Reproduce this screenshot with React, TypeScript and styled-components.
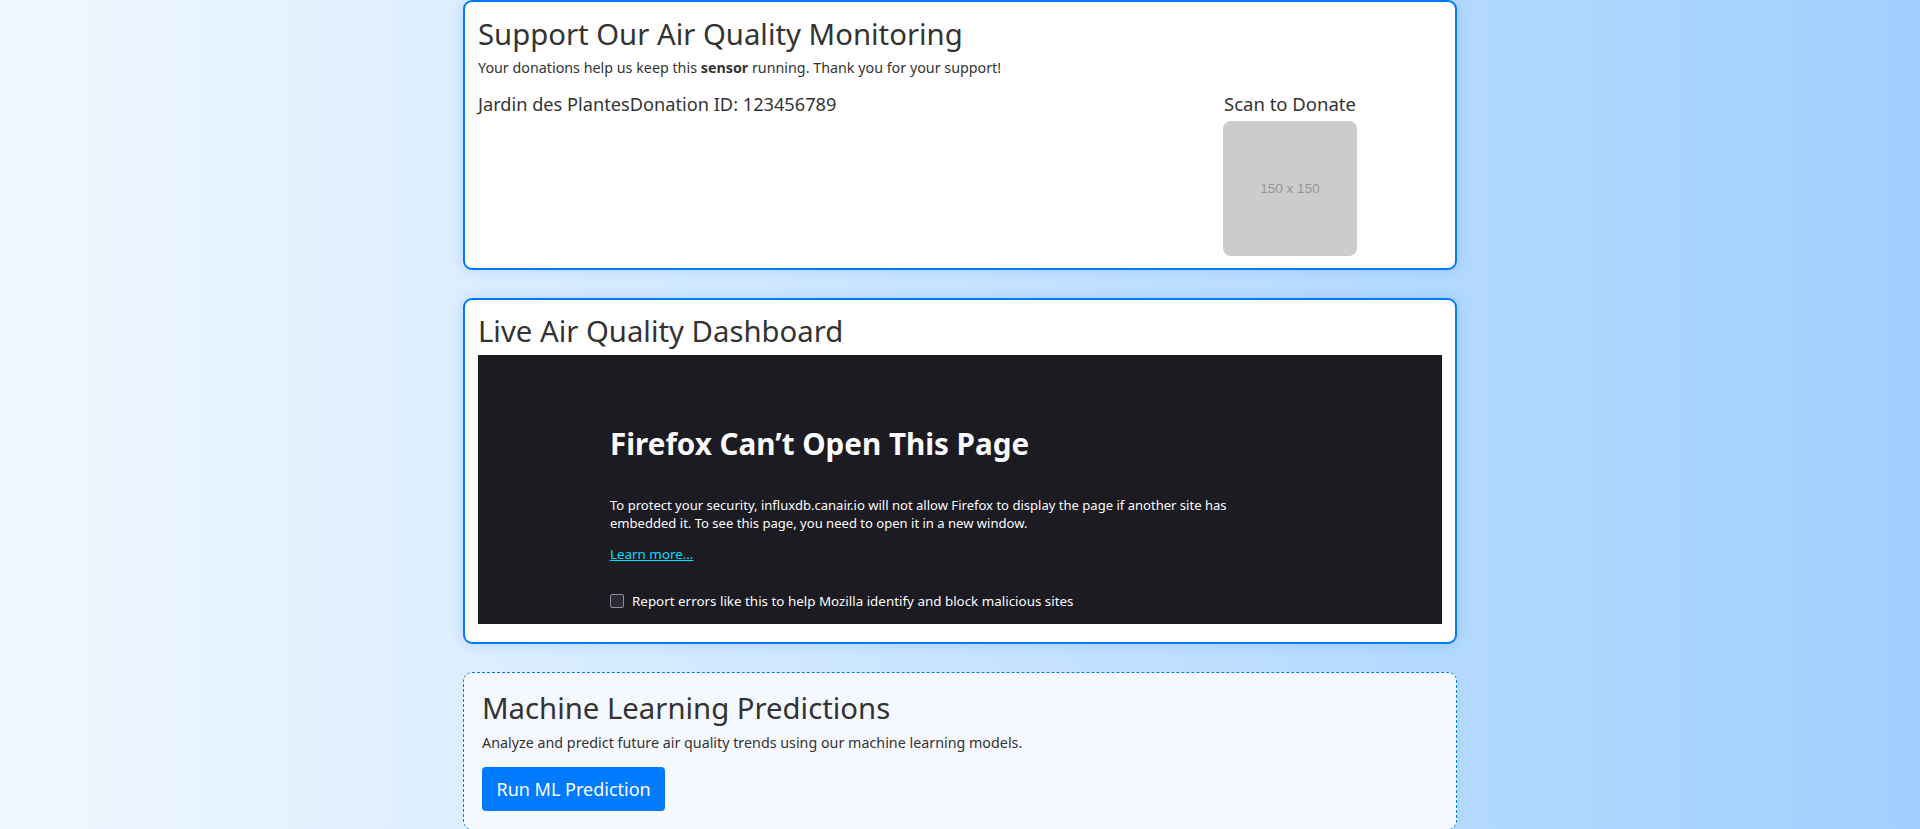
import React from "react";
import styled, { createGlobalStyle } from "styled-components";

const GlobalStyle = createGlobalStyle`
  html, body {
    margin: 0;
    padding: 0;
  }
  body {
    font-family: "Noto Sans", "Open Sans", sans-serif;
    color: #333;
    background: linear-gradient(to right, #f0f8ff 0%, #a0cfff 100%);
    min-height: 100vh;
  }
`;

const Page = styled.main`
  display: flex;
  flex-direction: column;
  align-items: center;
  gap: 28px;
  padding-bottom: 40px;
`;

const Card = styled.section<{ $variant?: "solid" | "dashed" }>`
  box-sizing: border-box;
  width: 994px;
  border-radius: 9px;
  ${(p) =>
    p.$variant === "dashed"
      ? `
    border: 1px dashed #007bff;
    background: #f5f9ff;
    padding: 17px 18px 18px;
  `
      : `
    border: 2px solid #007bff;
    background: #ffffff;
    padding: 12px 13px;
    box-shadow: 0 0 14px rgba(0, 123, 255, 0.18);
  `}
`;

const Title = styled.h2<{ $top?: number; $bottom?: number }>`
  margin: ${(p) => p.$top ?? 0}px 0 ${(p) => p.$bottom ?? 6}px;
  font-size: 29.3px;
  line-height: 36px;
  font-weight: 400;
  color: #333;
`;

const Lead = styled.p<{ $bottom?: number }>`
  margin: 0 0 ${(p) => p.$bottom ?? 14}px;
  font-size: 14.3px;
  line-height: 21px;
  color: #333;
`;

const DonateRow = styled.div`
  display: flex;
  align-items: flex-start;
`;

const DonateInfo = styled.div`
  flex: 1;
  font-size: 18.2px;
  line-height: 27px;
  color: #333;
`;

const QrColumn = styled.div`
  width: 304px;
  display: flex;
  flex-direction: column;
  align-items: center;
  gap: 3px;
`;

const QrLabel = styled.div`
  font-size: 18.5px;
  line-height: 26px;
  color: #333;
`;

const QrPlaceholder = styled.div`
  width: 134px;
  height: 135px;
  margin-top: 1px;
  border-radius: 8px;
  background: #cccccc;
  color: #969696;
  display: flex;
  align-items: center;
  justify-content: center;
  font-family: "Liberation Sans", Arial, sans-serif;
  font-size: 13.5px;
`;

const Frame = styled.div`
  height: 269px;
  margin: 0 0 6px;
  background: #1c1b22;
  color: #fbfbfe;
  box-sizing: border-box;
  padding: 72px 0 0 132px;
  display: flex;
  flex-direction: column;
  align-items: flex-start;
  overflow: hidden;
`;

const FrameTitle = styled.h1`
  margin: 0 0 35px;
  font-size: 29.6px;
  line-height: 33.6px;
  font-weight: 700;
  color: #fbfbfe;
`;

const FrameText = styled.p`
  margin: 0 0 13px;
  font-size: 13.05px;
  line-height: 18px;
  color: #fbfbfe;
`;

const FrameLink = styled.a`
  display: block;
  font-size: 13.4px;
  line-height: 18px;
  color: #00ddff;
  text-decoration: underline;
  margin-bottom: 29px;
`;

const CheckRow = styled.label`
  display: flex;
  align-items: center;
  gap: 8px;
  font-size: 13.4px;
  line-height: 18px;
  color: #fbfbfe;
`;

const CheckBox = styled.span`
  box-sizing: border-box;
  width: 14px;
  height: 14px;
  border: 1px solid #8f8f9d;
  border-radius: 2px;
  background: #2b2a33;
`;

const RunButton = styled.button`
  height: 44px;
  padding: 0 14.5px;
  border: none;
  border-radius: 4px;
  background: #007bff;
  color: #ffffff;
  font-family: "Noto Sans", "Open Sans", sans-serif;
  font-size: 18px;
  line-height: 44px;
  cursor: pointer;
`;

export default function App() {
  return (
    <>
      <GlobalStyle />
      <Page>
        <Card>
          <Title $top={2} $bottom={5}>
            Support Our Air Quality Monitoring
          </Title>
          <Lead $bottom={13}>
            Your donations help us keep this <strong>sensor</strong> running. Thank you for
            your support!
          </Lead>
          <DonateRow>
            <DonateInfo>
              Jardin des Plantes<span>Donation ID: 123456789</span>
            </DonateInfo>
            <QrColumn>
              <QrLabel>Scan to Donate</QrLabel>
              <QrPlaceholder>150 x 150</QrPlaceholder>
            </QrColumn>
          </DonateRow>
        </Card>

        <Card>
          <Title $top={1} $bottom={6}>
            Live Air Quality Dashboard
          </Title>
          <Frame>
            <FrameTitle>Firefox Can’t Open This Page</FrameTitle>
            <FrameText>
              To protect your security, influxdb.canair.io will not allow Firefox to display the
              page if another site has
              <br />
              embedded it. To see this page, you need to open it in a new window.
            </FrameText>
            <FrameLink href="#">Learn more…</FrameLink>
            <CheckRow>
              <CheckBox />
              Report errors like this to help Mozilla identify and block malicious sites
            </CheckRow>
          </Frame>
        </Card>

        <Card $variant="dashed">
          <Title $bottom={6}>Machine Learning Predictions</Title>
          <Lead>Analyze and predict future air quality trends using our machine learning models.</Lead>
          <RunButton>Run ML Prediction</RunButton>
        </Card>
      </Page>
    </>
  );
}
